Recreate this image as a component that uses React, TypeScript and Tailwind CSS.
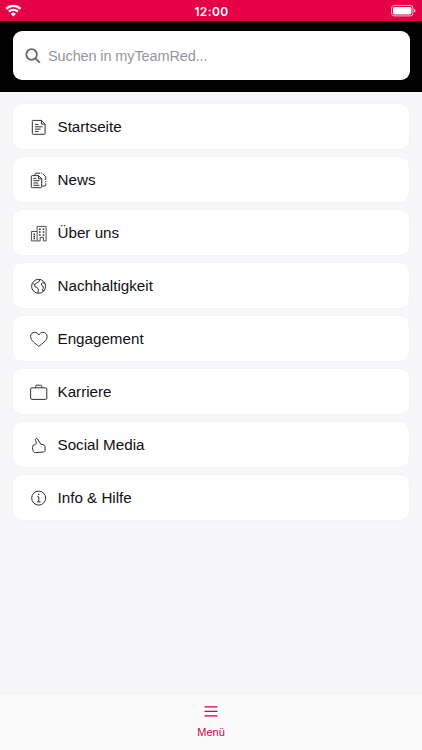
import type { ReactNode } from "react";

type MenuEntry = { label: string; icon: ReactNode };

const entries: MenuEntry[] = [
  {
    label: "Startseite",
    icon: (
      <>
        <path d="M3.2 2.4h8.3l3.6 3.6v9.4a.9.9 0 0 1-.9.9h-11a.9.9 0 0 1-.9-.9V3.3a.9.9 0 0 1 .9-.9z" />
        <path d="M11.5 2.4V6h3.6M5 6.4h3.4M5 8.8h7.6M5 11.1h5.6M5 13.4h3.6" />
      </>
    ),
  },
  {
    label: "News",
    icon: (
      <>
        <path d="M2.2 4.6h6.3l3.2 3.2v8a.9.9 0 0 1-.9.9H2.2a.9.9 0 0 1-.9-.9V5.5a.9.9 0 0 1 .9-.9z" />
        <path d="M8.5 4.6v3.2h3.2M3.4 7.4h2.7M3.4 9.7h6M3.4 12h4.8M3.4 14.3h6" />
        <path d="M4.9 4.4V3.2a1 1 0 0 1 1-1h6.2l3.7 3.6v8.2a1 1 0 0 1-1 1h-2.6" strokeDasharray="7 1 1.2 1" />
      </>
    ),
  },
  {
    label: "Über uns",
    icon: (
      <>
        <path className="stroke-[#505055]" d="M7.1 16.9V2.4h9v14.5h-2.7v-3.6h-3.2v3.6H7.1zM7.1 7.5H1.4v9.4h5.7" />
        <path strokeWidth="1.5" d="M9 5.2h1.6M12.7 5.2h1.6M9 8.1h1.6M12.7 8.1h1.6M9 11h1.6M12.7 11h1.6M3.5 10.2H5M3.5 12.4H5M3.5 14.6H5" />
      </>
    ),
  },
  {
    label: "Nachhaltigkeit",
    icon: (
      <>
        <circle cx="8.6" cy="9.3" r="7" />
        <path d="M9.8 2.5 9.1 4.6 7 5.7 4.7 7.6 4.9 9.7l2.3.9 1.2 2-.4 3.5M4.7 7.6l-1.6-.9M15 6.4l-2.2-.8-1.5 1 .6 2 1.4 1 .1 1.6-1 1.6.8 1.3 1.3-.5" />
      </>
    ),
  },
  {
    label: "Engagement",
    icon: (
      <path d="M8.8 16.3C5.7 13.8.6 10.6.6 6.5c0-2.6 1.9-4.2 4.1-4.2 1.9 0 3.2 1 4.1 2.7.9-1.7 2.3-2.7 4.1-2.7 2.2 0 4.2 1.6 4.2 4.2 0 4.1-5.1 7.3-8.3 9.8z" />
    ),
  },
  {
    label: "Karriere",
    icon: (
      <>
        <rect x=".6" y="4.8" width="16.2" height="11.6" rx="1.3" />
        <path d="M5.7 4.8V3.2a1 1 0 0 1 1-1h4a1 1 0 0 1 1 1v1.6" />
      </>
    ),
  },
  {
    label: "Social Media",
    icon: (
      <path d="M3 9.3c1.9-.4 3.2-1.2 3.4-2.4.1-1.2-1.2-2.5-1-3.5.3-1 1.5-1.2 2.2-.4l3.2 5.2 3.1.7c.8.2 1.1.7 1.1 1.5v4c0 1-.7 1.5-1.6 1.6l-7.9.6c-1.5 0-2.3-.8-2.6-2.2-.3-1.7-.5-3.5.1-5.1z" />
    ),
  },
  {
    label: "Info & Hilfe",
    icon: (
      <>
        <circle cx="8.7" cy="9.1" r="7" />
        <path d="M7.2 7.8h1.6v5M7 12.9h3.7" />
        <circle cx="8.7" cy="5.5" r=".75" className="fill-[#303030] stroke-none" />
      </>
    ),
  },
];

function StatusBar() {
  return (
    <div className="flex h-[21px] items-center justify-between bg-[#e60045] px-[5px] text-white">
      <svg className="h-[14px] w-[60px]" viewBox="0 0 60 14" fill="none" stroke="currentColor">
        <path strokeWidth="2.3" d="M1.3 4.8a10.2 10.2 0 0 1 14.1 0M3.9 7.6a6.5 6.5 0 0 1 8.9 0" />
        <path fill="currentColor" stroke="none" d="M5.8 9.7a3.7 3.7 0 0 1 5.1 0l-2.55 2.7z" />
      </svg>
      <span className="ml-[1px] pt-[2px] font-[Inter,sans-serif] text-[12px] font-semibold leading-[19px] tracking-[0.4px]">12:00</span>
      <svg className="h-[14px] w-[60px]" viewBox="0 0 60 14" fill="none" stroke="currentColor">
        <rect x="34.6" y="1.4" width="21.3" height="10.5" rx="2.6" strokeOpacity=".75" />
        <rect x="36.1" y="2.9" width="18.3" height="7.5" rx="1.4" fill="currentColor" stroke="none" />
        <path fill="currentColor" stroke="none" d="M57.2 5c1.7.6 1.7 2.8 0 3.4z" />
      </svg>
    </div>
  );
}

export default function App() {
  return (
    <div className="flex h-[750px] w-full flex-col overflow-hidden bg-[#f7f7f9] font-['Liberation_Sans',Arial,sans-serif]">
      <StatusBar />
      <header className="h-[71px] bg-black px-[12.5px] pt-[10px]">
        <div className="flex h-[49px] items-center rounded-[9px] bg-white pl-[12px]">
          <svg className="h-4 w-4" viewBox="0 0 16 16" fill="none" stroke="#68686c" strokeWidth="1.8">
            <circle cx="6.6" cy="6.5" r="5.3" />
            <path d="m10.4 10.3 4.5 4.4" />
          </svg>
          <span className="ml-[7.5px] text-[14.5px] leading-[20px] tracking-[-0.12px] text-[#96969b]">Suchen in myTeamRed...</span>
        </div>
      </header>
      <main className="flex flex-1 flex-col gap-[6px] px-[12px] pt-[11px]">
        {entries.map((entry) => (
          <div
            key={entry.label}
            className="flex h-[47px] shrink-0 items-center rounded-[10px] border border-[#f3f3f5] bg-white pl-[17px]"
          >
            <svg
              className="mt-[1px] h-[18px] w-[18px]"
              viewBox="0 0 18 18"
              fill="none"
              stroke="#303030"
              strokeWidth="1"
              strokeLinejoin="round"
            >
              {entry.icon}
            </svg>
            <span className="ml-[9.5px] mt-[1px] text-[15.2px] leading-[20px] text-[#101012]">{entry.label}</span>
          </div>
        ))}
      </main>
      <nav className="flex h-[57px] flex-col items-center border-t border-[#f2f2f4] bg-[#fafafa] pt-[11px] text-[#d20048]">
        <svg className="h-[12px] w-[14px]" viewBox="0 0 14 12" stroke="currentColor" strokeWidth="1.2">
          <path d="M.5 1.8h13M.5 6.3h13M.5 10.8h13" />
        </svg>
        <span className="mt-[8px] text-[11px] leading-[14px]">Menü</span>
      </nav>
    </div>
  );
}
